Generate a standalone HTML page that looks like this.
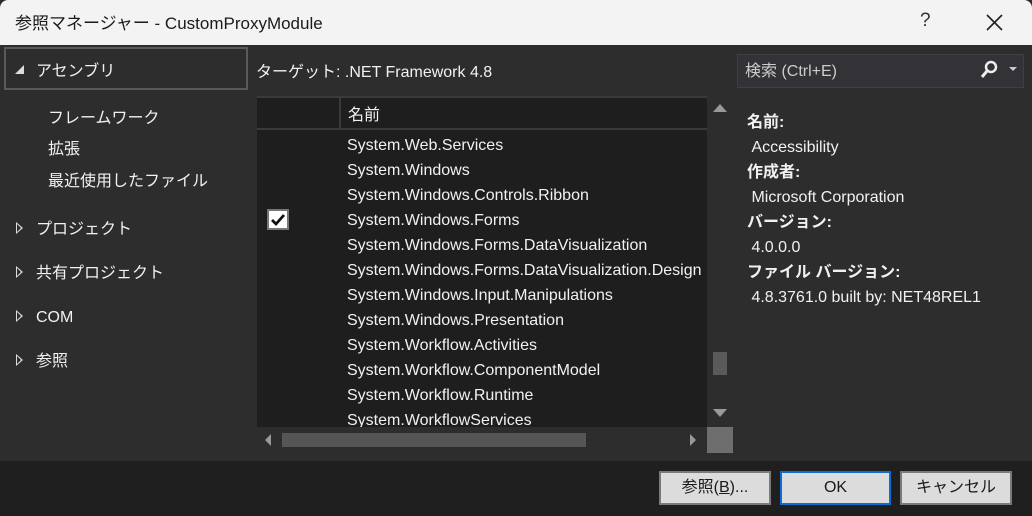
<!DOCTYPE html>
<html><head><meta charset="utf-8"><style>
*{margin:0;padding:0;box-sizing:border-box}
body{width:1032px;height:516px;overflow:hidden;background:#2d2d2d;font-family:"Liberation Sans","Noto Sans CJK JP",sans-serif;color:#f1f1f1;font-size:16px;position:relative}
.a{position:absolute;white-space:nowrap}
span.a{line-height:22px;height:22px}
.title{left:0;top:0;width:1032px;height:45px;background:#f3f3f3;color:#1a1a1a;border-radius:8px 8px 0 0}
.row{left:347px;line-height:25px;height:25px}
.btn{top:471px;height:34px;background:#dcdcdc;border:2px solid #7a7a7a;color:#1a1a1a;text-align:center;line-height:30px;font-size:16px}
.tri{width:0;height:0;border-top:6px solid transparent;border-bottom:6px solid transparent;border-left:7px solid #ddd}
.tri::after{content:"";position:absolute;left:-6px;top:-4px;border-top:4px solid transparent;border-bottom:4px solid transparent;border-left:4px solid #2d2d2d}
b{font-weight:bold}
.det div{height:25px;line-height:25px}
</style></head><body>
<div class="a title"><span class="a" style="left:15px;top:13px;font-size:17px">参照マネージャー - CustomProxyModule</span>
<span class="a" style="left:920px;top:10px;font-size:19px;color:#333">?</span>
<svg class="a" style="left:986px;top:14px" width="17" height="17"><path d="M1 1L16 16M16 1L1 16" stroke="#222" stroke-width="1.6"/></svg></div>

<div class="a" style="left:4px;top:47px;width:244px;height:43px;border:2px solid #5a5a5a"></div>
<div class="a" style="left:15px;top:65px;width:0;height:0;border-left:9px solid transparent;border-bottom:9px solid #ddd"></div>
<span class="a" style="left:36px;top:61px">アセンブリ</span>
<span class="a" style="left:48px;top:108px">フレームワーク</span>
<span class="a" style="left:48px;top:139px">拡張</span>
<span class="a" style="left:48px;top:171px">最近使用したファイル</span>
<div class="a tri" style="left:16px;top:222px"></div><span class="a" style="left:36px;top:219px">プロジェクト</span>
<div class="a tri" style="left:16px;top:266px"></div><span class="a" style="left:36px;top:263px">共有プロジェクト</span>
<div class="a tri" style="left:16px;top:310px"></div><span class="a" style="left:36px;top:307px">COM</span>
<div class="a tri" style="left:16px;top:354px"></div><span class="a" style="left:36px;top:351px">参照</span>

<span class="a" style="left:256px;top:62px">ターゲット: .NET Framework 4.8</span>

<div class="a" style="left:737px;top:54px;width:287px;height:34px;background:#333337;border:1px solid #3f3f46"></div>
<span class="a" style="left:745px;top:61px;color:#ccc">検索 (Ctrl+E)</span>
<svg class="a" style="left:980px;top:60px" width="40" height="20"><circle cx="11" cy="7" r="5" stroke="#eee" stroke-width="2.5" fill="none"/><path d="M7 11L2 17" stroke="#eee" stroke-width="3"/><path d="M29 7h8l-4 4z" fill="#ccc"/></svg>

<div class="a" style="left:257px;top:97px;width:450px;height:330px;background:#1e1e1e"></div>
<div class="a" style="left:257px;top:96px;width:450px;height:2px;background:#3a3a3a"></div>
<div class="a" style="left:257px;top:128px;width:450px;height:2px;background:#3a3a3a"></div>
<div class="a" style="left:339px;top:97px;width:2px;height:32px;background:#3a3a3a"></div>
<span class="a" style="left:348px;top:105px">名前</span>
<div class="a" style="left:257px;top:130px;width:450px;height:297px;overflow:hidden">
<div style="position:absolute;left:-257px;top:-130px;width:707px">
<div class="a row" style="top:133px">System.Web.Services</div>
<div class="a row" style="top:158px">System.Windows</div>
<div class="a row" style="top:183px">System.Windows.Controls.Ribbon</div>
<div class="a row" style="top:208px">System.Windows.Forms</div>
<div class="a row" style="top:233px">System.Windows.Forms.DataVisualization</div>
<div class="a row" style="top:258px">System.Windows.Forms.DataVisualization.Design</div>
<div class="a row" style="top:283px">System.Windows.Input.Manipulations</div>
<div class="a row" style="top:308px">System.Windows.Presentation</div>
<div class="a row" style="top:333px">System.Workflow.Activities</div>
<div class="a row" style="top:358px">System.Workflow.ComponentModel</div>
<div class="a row" style="top:383px">System.Workflow.Runtime</div>
<div class="a row" style="top:408px">System.WorkflowServices</div>
</div></div>
<div class="a" style="left:267px;top:209px;width:22px;height:21px;background:#fff;border:2px solid #777"></div>
<svg class="a" style="left:270px;top:212px" width="16" height="15"><path d="M2 8l4 4 8-9" stroke="#111" stroke-width="2.8" fill="none"/></svg>

<div class="a" style="left:713px;top:104px;border-left:7px solid transparent;border-right:7px solid transparent;border-bottom:8px solid #999"></div>
<div class="a" style="left:713px;top:352px;width:14px;height:23px;background:#5a5a5a"></div>
<div class="a" style="left:713px;top:409px;border-left:7px solid transparent;border-right:7px solid transparent;border-top:8px solid #999"></div>
<div class="a" style="left:265px;top:434px;border-top:6px solid transparent;border-bottom:6px solid transparent;border-right:6px solid #999"></div>
<div class="a" style="left:282px;top:433px;width:304px;height:14px;background:#555"></div>
<div class="a" style="left:690px;top:434px;border-top:6px solid transparent;border-bottom:6px solid transparent;border-left:6px solid #999"></div>
<div class="a" style="left:707px;top:427px;width:26px;height:26px;background:#6e6e6e"></div>

<div class="a det" style="left:747px;top:110px">
<div><b>名前:</b></div><div>&nbsp;Accessibility</div><div><b>作成者:</b></div><div>&nbsp;Microsoft Corporation</div><div><b>バージョン:</b></div><div>&nbsp;4.0.0.0</div><div><b>ファイル バージョン:</b></div><div>&nbsp;4.8.3761.0 built by: NET48REL1</div></div>

<div class="a" style="left:0;top:461px;width:1032px;height:55px;background:#1f1f1f"></div>
<div class="a btn" style="left:659px;width:112px">参照(<u>B</u>)...</div>
<div class="a btn" style="left:780px;width:111px;border-color:#0f6cd0">OK</div>
<div class="a btn" style="left:900px;width:112px">キャンセル</div>
</body></html>
